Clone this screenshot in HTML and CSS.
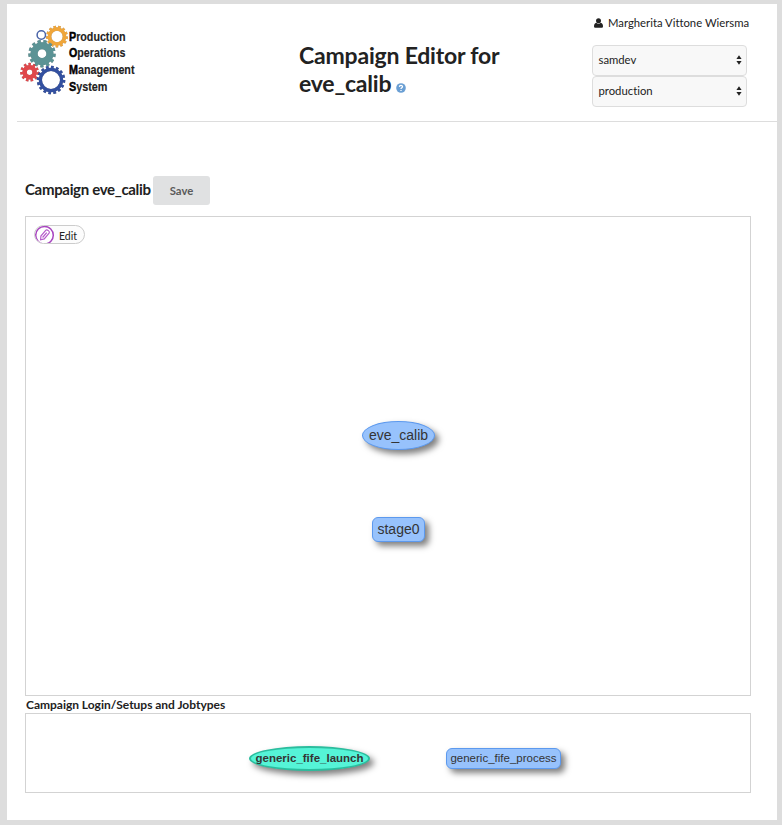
FILE: index.html
```html
<!DOCTYPE html>
<html lang="en">
<head>
<meta charset="utf-8">
<title>Campaign Editor for eve_calib</title>
<link rel="stylesheet" href="styles.css">
</head>
<body>
<div class="sheet">
  <header class="header">
    <svg class="logo" viewBox="18 22 130 76" width="130" height="76">
      <g fill="none">
        <circle cx="41.3" cy="35" r="4.2" stroke="#4a64a8" stroke-width="1.5"/>
        <g class="gear-shade"><circle cx="57" cy="36.5" r="7.5" stroke="#f0a63a" stroke-width="3.6"/>
        <circle cx="57" cy="36.5" r="9.6" stroke="#f0a63a" stroke-width="2.6" pathLength="39" stroke-dasharray="1.6 1.4"/></g>
        <g class="gear-shade"><circle cx="42" cy="53.7" r="7.9" stroke="#5b9395" stroke-width="7"/>
        <circle cx="42" cy="53.7" r="12.2" stroke="#5b9395" stroke-width="3" pathLength="39" stroke-dasharray="1.6 1.4"/></g>
        <g class="gear-shade"><circle cx="29.6" cy="72.2" r="5" stroke="#e0474b" stroke-width="4.6"/>
        <circle cx="29.6" cy="72.2" r="8.1" stroke="#e0474b" stroke-width="2.6" pathLength="33" stroke-dasharray="1.6 1.4"/></g>
        <g class="gear-shade"><circle cx="51" cy="80" r="10.6" stroke="#3350a0" stroke-width="3.2"/>
        <circle cx="51" cy="80" r="13" stroke="#3350a0" stroke-width="2.6" pathLength="48" stroke-dasharray="1.6 1.4"/></g>
      </g>
      <g class="logo-text">
        <text x="69" y="41" textLength="56.5" lengthAdjust="spacingAndGlyphs"><tspan class="initial">P</tspan>roduction</text>
        <text x="69" y="57.4" textLength="56.5" lengthAdjust="spacingAndGlyphs"><tspan class="initial">O</tspan>perations</text>
        <text x="69" y="74" textLength="65.5" lengthAdjust="spacingAndGlyphs"><tspan class="initial">M</tspan>anagement</text>
        <text x="69" y="90.6" textLength="38.5" lengthAdjust="spacingAndGlyphs"><tspan class="initial">S</tspan>ystem</text>
      </g>
    </svg>
    <h1 class="title">Campaign Editor for eve_calib <svg class="help" viewBox="0 0 10 10" width="10" height="10"><circle cx="5" cy="5" r="4.8" fill="#6a9fd4"/><path d="M3.4 3.9C3.5 2 6.5 2 6.5 3.8C6.5 4.8 5 4.8 5 6M5 6.9V8" fill="none" stroke="#fff" stroke-width="1.3"/></svg></h1>
    <div class="account">
      <div class="user"><svg viewBox="0 0 9 10" width="9" height="10"><circle cx="4.5" cy="2.7" r="2.5" fill="#222"/><path d="M2.2 4.8Q4.5 6.5 6.8 4.8Q9 5.2 9 8.5Q9 9.7 7.8 9.7H1.2Q0 9.7 0 8.5Q0 5.2 2.2 4.8Z" fill="#222"/></svg><span>Margherita Vittone Wiersma</span></div>
      <div class="select"><span>samdev</span><svg viewBox="0 0 6 10" width="6" height="10"><path d="M.4 4L3 .2L5.6 4ZM.4 6L3 9.8L5.6 6Z" fill="#222"/></svg></div>
      <div class="select"><span>production</span><svg viewBox="0 0 6 10" width="6" height="10"><path d="M.4 4L3 .2L5.6 4ZM.4 6L3 9.8L5.6 6Z" fill="#222"/></svg></div>
    </div>
  </header>
  <main class="main">
    <div class="bar"><h2 class="name">Campaign eve_calib</h2><button class="save">Save</button></div>
    <div class="canvas stages">
      <div class="edit"><svg viewBox="0 0 20 18" width="20" height="18"><circle cx="9.5" cy="9.2" r="8.8" fill="#fff" stroke="#a845c0" stroke-width="1.5"/><g transform="translate(9.5 9.2) rotate(40)" fill="none" stroke="#b65bcb" stroke-width="1.2"><path d="M-2.2 -4.5Q-2.2 -6 0 -6Q2.2 -6 2.2 -4.5V3L0 6L-2.2 3ZM0 -3.5V3"/></g></svg><span>Edit</span></div>
      <div class="node oval calib">eve_calib</div>
      <div class="node box stage">stage0</div>
    </div>
    <h3 class="subhead">Campaign Login/Setups and Jobtypes</h3>
    <div class="canvas setups">
      <div class="node oval launch">generic_fife_launch</div>
      <div class="node box process">generic_fife_process</div>
    </div>
  </main>
</div>
</body>
</html>
```
FILE: styles.css
```css
* { box-sizing: border-box; }
body { margin: 0; padding: 4px 5px 5px 7px; height: 825px; background: #ddd; color: #222; font-family: Lato, sans-serif; font-variant-ligatures: none; }
h1, h2, h3 { margin: 0; font-weight: 700; }
svg { flex: none; }
.sheet { height: 816px; background: #fff; }
.header { display: flex; align-items: flex-start; height: 118px; margin-left: 10px; border-bottom: 1px solid #ddd; }
.logo { margin: 18px 0 0 1px; overflow: visible; }
.logo-text { font: bold 12.5px "Liberation Sans", sans-serif; fill: #222; stroke: #222; stroke-width: .15; }
.initial { fill: #000; stroke: #000; stroke-width: .5; }
.gear-shade { filter: drop-shadow(.7px .8px .6px rgba(0, 0, 0, .4)); }
.title { width: 230px; margin: 37px 0 0 151px; font-size: 23px; line-height: 28px; letter-spacing: -.2px; }
.help { margin-left: -1px; vertical-align: -1px; }
.account { width: 160px; margin: 10px 0 0 63px; }
.user { display: flex; align-items: center; gap: 5px; height: 18px; margin: 0 0 13px 2px; padding-bottom: 1px; font-size: 11.3px; white-space: nowrap; }
.select { display: flex; justify-content: space-between; align-items: center; width: 155px; height: 31px; padding: 0 4px 2px 5.5px; border: 1px solid #ddd; border-radius: 4px; background: #f8f8f8; font-size: 11.3px; }
.main { padding: 54px 26px 0 18px; }
.bar { display: flex; align-items: center; gap: 2px; height: 29px; }
.name { width: 126px; font-size: 15px; letter-spacing: -.32px; line-height: 18px; padding-bottom: 4px; white-space: nowrap; }
.save { width: 57px; height: 29px; padding: 0; border: 0; border-radius: 3px; background: #e0e1e2; color: #5a5a5a; font: 700 11.3px Lato, sans-serif; }
.canvas { position: relative; border: 1px solid #d3d3d3; }
.stages { height: 480px; margin-top: 11px; padding: 8px; }
.edit { display: flex; align-items: flex-start; gap: 4px; width: 51px; height: 19px; overflow: hidden; border: 1px solid #ccc; border-radius: 10px; background: #fcfcfc; font-size: 10.5px; line-height: 21px; }
.subhead { height: 17px; padding-left: 1px; font-size: 12px; letter-spacing: -.02px; line-height: 17px; }
.setups { height: 80px; }
.node { position: absolute; display: flex; align-items: center; justify-content: center; padding-bottom: 2px; border: 1px solid #5c99ee; background: #97c2fc; color: #343434; font-family: "Liberation Sans", sans-serif; white-space: nowrap; box-shadow: 4px 4px 6px rgba(0, 0, 0, .5); }
.oval { border-radius: 50%; }
.box { border-radius: 6px; }
.calib { left: 336px; top: 204px; width: 73px; height: 29px; font-size: 14px; }
.stage { left: 346px; top: 300px; width: 53px; height: 25px; font-size: 14px; }
.launch { left: 223px; top: 32px; width: 121px; height: 25px; border: 2px solid #2bbd9e; background: #55f4d7; font-size: 11.5px; font-weight: 700; }
.process { left: 420px; top: 34px; width: 115px; height: 21px; font-size: 11.5px; }
```
